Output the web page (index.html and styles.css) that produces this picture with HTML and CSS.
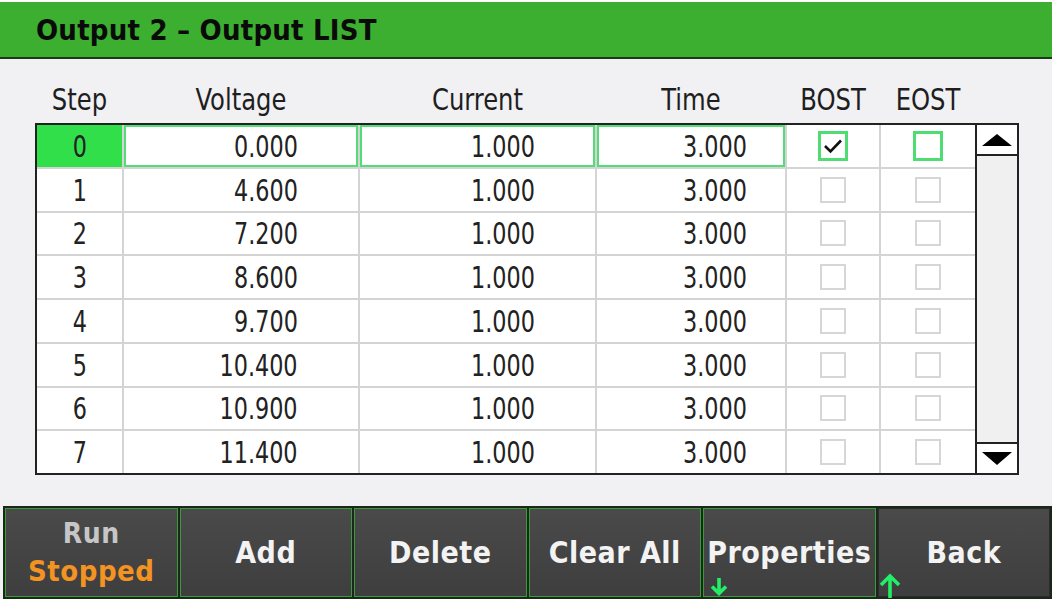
FILE: index.html
```html
<!DOCTYPE html>
<html>
<head>
<meta charset="utf-8">
<title>Output 2 - Output LIST</title>
<link rel="stylesheet" href="styles.css">
</head>
<body>
<div class="screen">
  <header class="titlebar"><h1 class="title">Output 2 – Output LIST</h1></header>
  <div class="labels">
    <span class="lbl">Step</span><span class="lbl">Voltage</span><span class="lbl">Current</span><span class="lbl">Time</span><span class="lbl">BOST</span><span class="lbl">EOST</span>
  </div>
  <div class="list">
    <div class="grid">
      <div class="cell step sel-step"><span class="t">0</span></div>
      <div class="cell num edit"><span class="v">0.000</span></div>
      <div class="cell num edit"><span class="v">1.000</span></div>
      <div class="cell num time edit"><span class="v">3.000</span></div>
      <div class="cell chk"><span class="box box-sel"><svg viewBox="0 0 24 24" width="24" height="24"><polyline points="4,12 9.5,17.5 20,6.5" fill="none" stroke="#111" stroke-width="2.6"/></svg></span></div>
      <div class="cell chk"><span class="box box-sel"></span></div>

      <div class="cell step"><span class="t">1</span></div><div class="cell num"><span class="v">4.600</span></div><div class="cell num"><span class="v">1.000</span></div><div class="cell num time"><span class="v">3.000</span></div><div class="cell chk"><span class="box"></span></div><div class="cell chk"><span class="box"></span></div>
      <div class="cell step"><span class="t">2</span></div><div class="cell num"><span class="v">7.200</span></div><div class="cell num"><span class="v">1.000</span></div><div class="cell num time"><span class="v">3.000</span></div><div class="cell chk"><span class="box"></span></div><div class="cell chk"><span class="box"></span></div>
      <div class="cell step"><span class="t">3</span></div><div class="cell num"><span class="v">8.600</span></div><div class="cell num"><span class="v">1.000</span></div><div class="cell num time"><span class="v">3.000</span></div><div class="cell chk"><span class="box"></span></div><div class="cell chk"><span class="box"></span></div>
      <div class="cell step"><span class="t">4</span></div><div class="cell num"><span class="v">9.700</span></div><div class="cell num"><span class="v">1.000</span></div><div class="cell num time"><span class="v">3.000</span></div><div class="cell chk"><span class="box"></span></div><div class="cell chk"><span class="box"></span></div>
      <div class="cell step"><span class="t">5</span></div><div class="cell num"><span class="v">10.400</span></div><div class="cell num"><span class="v">1.000</span></div><div class="cell num time"><span class="v">3.000</span></div><div class="cell chk"><span class="box"></span></div><div class="cell chk"><span class="box"></span></div>
      <div class="cell step"><span class="t">6</span></div><div class="cell num"><span class="v">10.900</span></div><div class="cell num"><span class="v">1.000</span></div><div class="cell num time"><span class="v">3.000</span></div><div class="cell chk"><span class="box"></span></div><div class="cell chk"><span class="box"></span></div>
      <div class="cell step"><span class="t">7</span></div><div class="cell num"><span class="v">11.400</span></div><div class="cell num"><span class="v">1.000</span></div><div class="cell num time"><span class="v">3.000</span></div><div class="cell chk"><span class="box"></span></div><div class="cell chk"><span class="box"></span></div>
    </div>
    <div class="scrollbar">
      <div class="sb-btn sb-up"><span class="tri-up"></span></div>
      <div class="sb-track"></div>
      <div class="sb-btn sb-down"><span class="tri-down"></span></div>
    </div>
  </div>
  <div class="softkeys">
    <div class="key key-run"><span class="run-label">Run</span><span class="run-state">Stopped</span></div>
    <div class="key">Add</div>
    <div class="key">Delete</div>
    <div class="key">Clear All</div>
    <div class="key">Properties<svg class="arrow-down" viewBox="0 0 18 18" width="18" height="18"><path d="M9 0 V15 M2 8.5 L9 15.5 L16 8.5" fill="none" stroke="#22ee66" stroke-width="3.6"/></svg></div>
    <div class="key key-back">Back<svg class="arrow-up" viewBox="0 0 22 26" width="22" height="26"><path d="M11 26 V4 M2 13 L11 4 L20 13" fill="none" stroke="#22ee66" stroke-width="3.6"/></svg></div>
  </div>
</div>
</body>
</html>
```

FILE: styles.css
```css
* { box-sizing: border-box; margin: 0; padding: 0; }

body {
  width: 1056px;
  height: 601px;
  overflow: hidden;
  background: #ffffff;
  font-family: "DejaVu Sans Condensed", "DejaVu Sans", sans-serif;
  color: #1e1e1e;
}

.screen {
  width: 1052px;
  margin-top: 2px;
  background: #f1f0f3;
  display: flex;
  flex-direction: column;
}

.titlebar {
  height: 57px;
  background: #3caf30;
  border-bottom: 2px solid #1d3a18;
  display: flex;
  align-items: center;
  padding-left: 36px;
}

.title {
  font: bold 29px "DejaVu Sans Condensed", "DejaVu Sans", sans-serif;
  color: #0a0a0a;
  letter-spacing: 0.2px;
}

.labels {
  display: grid;
  grid-template-columns: 85px 234px 235px 188px 92px 94px;
  column-gap: 2px;
  height: 64px;
  padding: 25px 0 8px 37px;
  font-size: 31px;
  line-height: 31px;
  text-align: center;
}
.lbl {
  display: inline-block;
  transform: scaleX(0.87);
  transform-origin: center;
}

.list {
  margin-left: 35px;
  width: 984px;
  height: 352px;
  border: 2px solid #222;
  display: flex;
  background: #fff;
}

.grid {
  width: 938px;
  display: grid;
  grid-template-columns: 85px 234px 235px 188px 92px 94px;
  grid-template-rows: repeat(8, 1fr);
  gap: 2px;
  background: #d4d4d4;
}

.cell {
  background: #fff;
  display: flex;
  align-items: center;
  font-size: 31px;
  color: #222;
}
.t, .v { display: inline-block; transform: scaleX(0.8); }
.t { transform-origin: center; }
.v { transform-origin: right center; }

.step { justify-content: center; }
.sel-step { background: #31df4b; }

.num { justify-content: flex-end; padding-right: 60px; }
.num.time { padding-right: 38px; }
.edit { border: 2px solid #55dc77; }
.num.edit { padding-right: 58px; }
.num.time.edit { padding-right: 36px; }

.chk { justify-content: center; }
.box {
  width: 26px;
  height: 26px;
  border: 2px solid #d6d6d6;
  display: flex;
  align-items: center;
  justify-content: center;
}
.box-sel {
  width: 30px;
  height: 30px;
  border: 3px solid #4fdc72;
}

.scrollbar {
  width: 42px;
  border-left: 2px solid #222;
  display: flex;
  flex-direction: column;
  background: #f0f0f0;
}
.sb-btn {
  height: 31px;
  display: flex;
  align-items: center;
  justify-content: center;
  background: #fff;
}
.sb-up { border-bottom: 2px solid #222; }
.sb-down { border-top: 2px solid #222; }
.sb-track { flex: 1; }

.tri-up {
  width: 0; height: 0;
  border-left: 15px solid transparent;
  border-right: 15px solid transparent;
  border-bottom: 12px solid #000;
}
.tri-down {
  width: 0; height: 0;
  border-left: 15px solid transparent;
  border-right: 15px solid transparent;
  border-top: 13px solid #000;
}

.softkeys {
  margin-top: 31px;
  margin-left: 3px;
  width: 1049px;
  height: 93px;
  padding: 2px;
  background: #1a281a;
  display: grid;
  grid-template-columns: repeat(6, 1fr);
  gap: 2px;
}

.key {
  position: relative;
  background: linear-gradient(#4a4a4a, #3e3e3e);
  border: 1px solid #3c9a3c;
  display: flex;
  flex-direction: column;
  align-items: center;
  justify-content: center;
  font: bold 30px "DejaVu Sans Condensed", "DejaVu Sans", sans-serif;
  color: #f3f3f3;
  letter-spacing: 0.5px;
}
.key-back { border-color: #2b2b2b; }

.run-label { color: #c6c6c6; font-size: 28px; line-height: 36px; }
.run-state { color: #f39322; font-size: 29px; line-height: 38px; }

.arrow-down { position: absolute; left: 6px; bottom: 0; }
.arrow-up { position: absolute; left: 0; bottom: -2px; }
```
